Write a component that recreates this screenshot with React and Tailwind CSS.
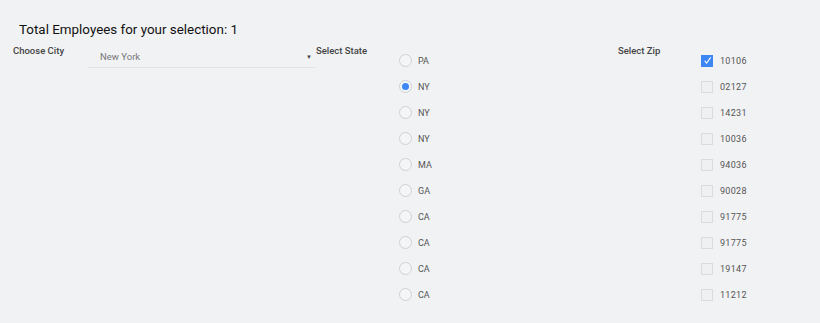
import React, { useState } from "react";

const states = ["PA", "NY", "NY", "NY", "MA", "GA", "CA", "CA", "CA", "CA"];
const zips = ["10106", "02127", "14231", "10036", "94036", "90028", "91775", "91775", "19147", "11212"];

const App = () => {
  const [stateIdx, setStateIdx] = useState(1);
  const [checked, setChecked] = useState([0]);

  const toggleZip = (i) =>
    setChecked((c) => (c.includes(i) ? c.filter((x) => x !== i) : [...c, i]));

  return (
    <div
      className="w-[820px] h-[323px] bg-[#f1f2f4] overflow-hidden"
      style={{ fontFamily: "Roboto, 'Liberation Sans', sans-serif" }}
    >
      <div className="pl-[19px] pt-[22px] text-[13.4px] leading-[16px] text-[#111]">
        Total Employees for your selection: 1
      </div>

      <div className="flex pl-[13px] mt-[7px]">
        {/* City */}
        <div className="w-[75px] text-[9.5px] font-medium text-[#444] leading-[12px]">
          Choose City
        </div>
        <div className="w-[227px] h-[23px] border-b border-[#e2e3e6] flex items-start justify-between pl-[12px] pr-[3px] pt-[6px]">
          <span className="text-[9.5px] text-[#777] leading-[12px]">New York</span>
          <span className="text-[6px] text-[#444] leading-[12px]">▼</span>
        </div>

        {/* State */}
        <div className="w-[84px] pl-[1px] text-[9.5px] font-medium text-[#444] leading-[12px]">
          Select State
        </div>
        <div className="w-[219px] flex flex-col pt-[3px]">
          {states.map((s, i) => (
            <label
              key={i}
              onClick={() => setStateIdx(i)}
              className="flex items-center h-[26px] cursor-pointer"
            >
              <span className="w-[13px] h-[13px] -mt-[1px] rounded-full border border-[#cdd0d6] flex items-center justify-center bg-[#f4f5f7]">
                {stateIdx === i && <span className="w-[7px] h-[7px] rounded-full bg-[#3d87f5]" />}
              </span>
              <span className="ml-[6px] text-[9px] leading-[12px] text-[#555]">{s}</span>
            </label>
          ))}
        </div>

        {/* Zip */}
        <div className="w-[83px] text-[9.5px] font-medium text-[#444] leading-[12px]">
          Select Zip
        </div>
        <div className="flex flex-col pt-[3px]">
          {zips.map((z, i) => {
            const on = checked.includes(i);
            return (
              <label
                key={i}
                onClick={() => toggleZip(i)}
                className="flex items-center h-[26px] cursor-pointer"
              >
                <span
                  className={
                    "w-[12px] h-[12px] -mt-[1px] border flex items-center justify-center " +
                    (on ? "bg-[#3d87f5] border-[#3d87f5]" : "bg-[#eef0f2] border-[#d9dbdf]")
                  }
                >
                  {on && (
                    <svg width="9" height="9" viewBox="0 0 10 10">
                      <path d="M2 5.5 L4 8 L8.5 1.5" fill="none" stroke="#fff" strokeWidth="1.2" />
                    </svg>
                  )}
                </span>
                <span className="ml-[7px] text-[9px] leading-[12px] text-[#555] tracking-[0.3px]">{z}</span>
              </label>
            );
          })}
        </div>
      </div>
    </div>
  );
};

export default App;
